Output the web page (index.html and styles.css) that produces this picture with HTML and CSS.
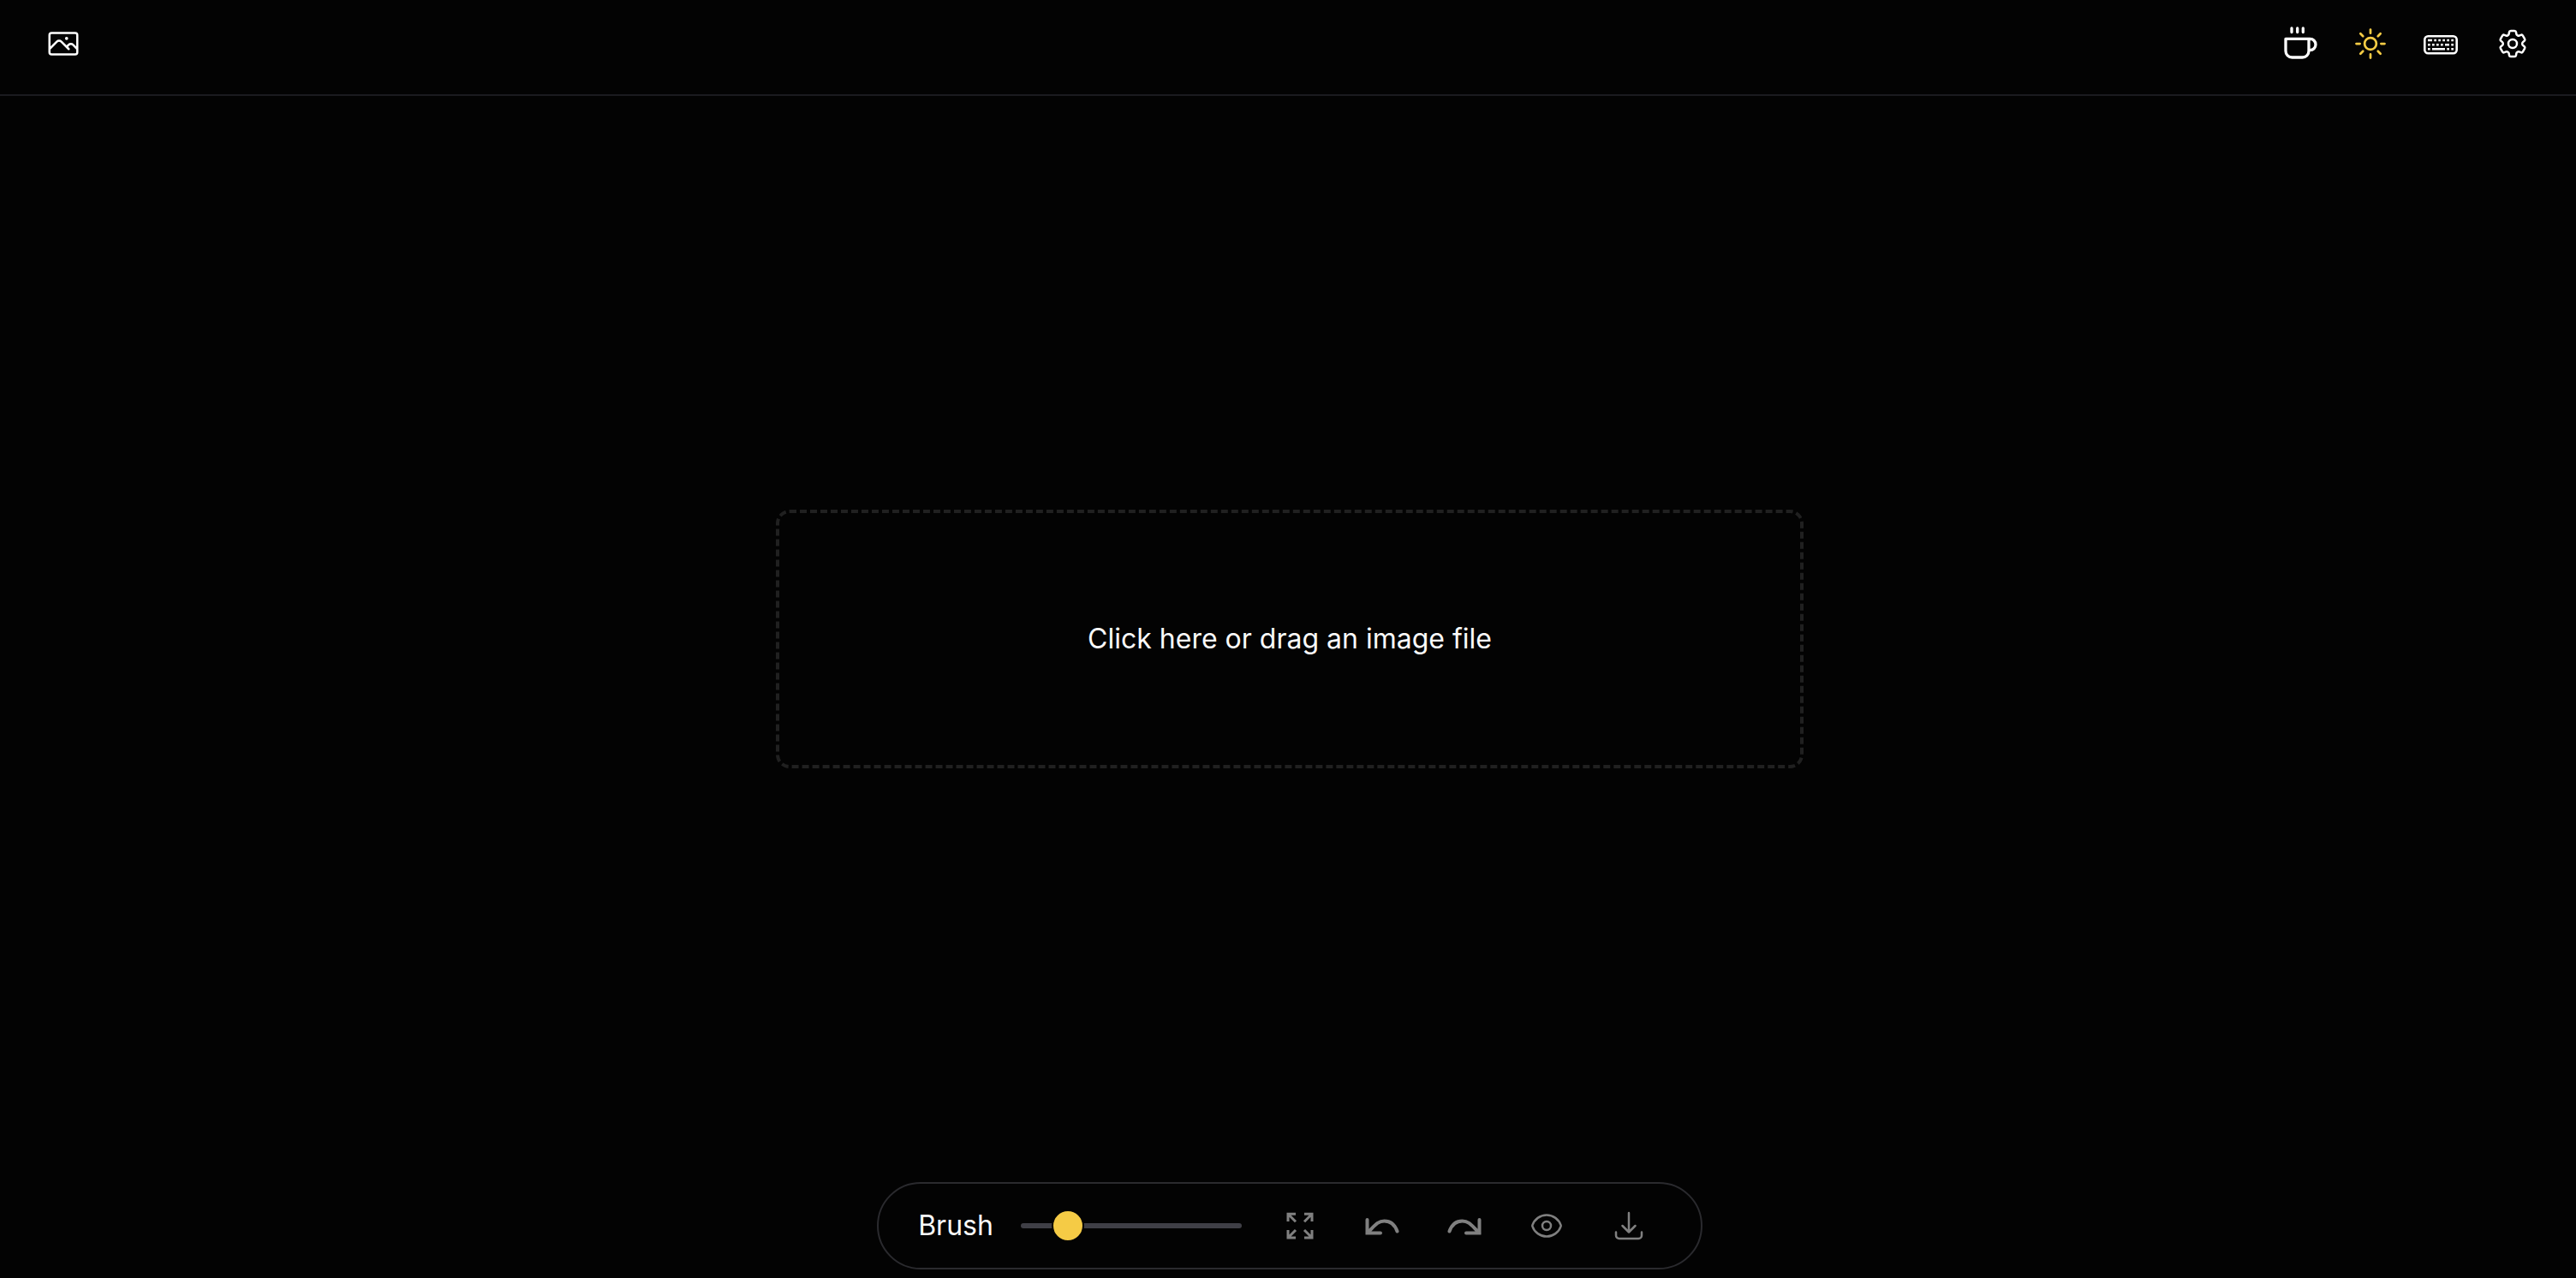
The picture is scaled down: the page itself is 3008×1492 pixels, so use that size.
FILE: index.html
```html
<!DOCTYPE html>
<html lang="en">
<head>
<meta charset="utf-8">
<meta name="viewport" content="width=device-width, initial-scale=1">
<title>Image editor</title>
<link rel="stylesheet" href="styles.css">
</head>
<body>
<header class="header">
  <button class="icon-button" type="button" aria-label="Upload image">
    <svg class="icon" viewBox="0 0 24 24"><path d="m2.25 15.75 5.159-5.159a2.25 2.25 0 0 1 3.182 0l5.159 5.159m-1.5-1.5 1.409-1.409a2.25 2.25 0 0 1 3.182 0l2.909 2.909m-18 3.75h16.5a1.5 1.5 0 0 0 1.5-1.5V6a1.5 1.5 0 0 0-1.5-1.5H3.75A1.5 1.5 0 0 0 2.25 6v12a1.5 1.5 0 0 0 1.5 1.5Zm10.5-11.25h.008v.008h-.008V8.25Zm.375 0a.375.375 0 1 1-.75 0 .375.375 0 0 1 .75 0Z"/></svg>
  </button>
  <nav class="header-actions" aria-label="Settings">
    <a class="icon-button" href="#coffee" aria-label="Buy me a coffee">
      <svg class="icon icon-coffee" viewBox="0 0 40 40"><path d="M3 14.3h27v14.2a7.5 7.5 0 0 1-7.5 7.5h-12a7.5 7.5 0 0 1-7.5-7.5ZM30 14.3h1.3a6.7 6.7 0 0 1 0 13.4H30M10 2v4.5M16.7 2v4.5M23.3 2v4.5"/></svg>
    </a>
    <button class="icon-button icon-button-accent" type="button" aria-label="Toggle theme">
      <svg class="icon icon-large" viewBox="0 0 24 24"><path d="M12 3v2.25m6.364.386-1.591 1.591M21 12h-2.25m-.386 6.364-1.591-1.591M12 18.75V21m-4.773-4.227-1.591 1.591M5.25 12H3m4.227-4.773L5.636 5.636M15.75 12a3.75 3.75 0 1 1-7.5 0 3.75 3.75 0 0 1 7.5 0Z"/></svg>
    </button>
    <button class="icon-button" type="button" aria-label="Keyboard shortcuts">
      <svg class="icon icon-large icon-keyboard" viewBox="0 0 44 44"><rect x="1.3" y="13.3" width="37.4" height="20" rx="4"/><path d="M5 18h5M12.3 18h2.7M17.3 18h2.7M22.3 18h2.7M27.3 18h2.7M32.3 18h2.7M5 23.3h2.7M10 23.3h2.7M15 23.3h2.7M20 23.3h2.7M25 23.3h5M32.3 23.3h2.7M5 28.3h2.7M10 28.3h15M27.3 28.3h2.7M32.3 28.3h2.7"/></svg>
    </button>
    <button class="icon-button" type="button" aria-label="Settings">
      <svg class="icon" viewBox="0 0 24 24"><path d="M9.594 3.94c.09-.542.56-.94 1.11-.94h2.593c.55 0 1.02.398 1.11.94l.213 1.281c.063.374.313.686.645.87.074.04.147.083.22.127.325.196.72.257 1.075.124l1.217-.456a1.125 1.125 0 0 1 1.37.49l1.296 2.247a1.125 1.125 0 0 1-.26 1.431l-1.003.827c-.293.241-.438.613-.43.992a7.723 7.723 0 0 1 0 .255c-.008.378.137.75.43.991l1.004.827c.424.35.534.955.26 1.43l-1.298 2.247a1.125 1.125 0 0 1-1.369.491l-1.217-.456c-.355-.133-.75-.072-1.076.124a6.47 6.47 0 0 1-.22.128c-.331.183-.581.495-.644.869l-.213 1.281c-.09.543-.56.94-1.11.94h-2.594c-.55 0-1.019-.398-1.11-.94l-.213-1.281c-.062-.374-.312-.686-.644-.87a6.52 6.52 0 0 1-.22-.127c-.325-.196-.72-.257-1.076-.124l-1.217.456a1.125 1.125 0 0 1-1.369-.49l-1.297-2.247a1.125 1.125 0 0 1 .26-1.431l1.004-.827c.292-.24.437-.613.43-.991a6.932 6.932 0 0 1 0-.255c.007-.38-.138-.751-.43-.992l-1.004-.827a1.125 1.125 0 0 1-.26-1.43l1.297-2.247a1.125 1.125 0 0 1 1.37-.491l1.216.456c.356.133.751.072 1.076-.124.072-.044.146-.086.22-.128.332-.183.582-.495.644-.869l.214-1.28Z"/><path d="M15 12a3 3 0 1 1-6 0 3 3 0 0 1 6 0Z"/></svg>
    </button>
  </nav>
</header>

<main class="workspace">
  <label class="dropzone" for="file">Click here or drag an image file
    <input class="file-input" id="file" type="file" accept="image/*">
  </label>
</main>

<footer class="dock">
  <div class="toolbar">
    <label class="brush-label" for="brush">Brush</label>
    <input class="slider" id="brush" type="range" min="10" max="200" value="41">
    <div class="tools">
      <button class="tool" type="button" aria-label="Reset zoom" disabled>
        <svg class="icon icon-expand" viewBox="0 0 40 40"><path d="M6 15V6.300h9M6 6.300l9 9M25 6.300h9V15M34 6.300l-9 9M6 25v9h9M6 34l9-9M25 34h9v-9M34 34l-9-9"/></svg>
      </button>
      <button class="tool" type="button" aria-label="Undo" disabled>
        <svg class="icon icon-turn" viewBox="0 0 40 40"><path d="M2.5 13v15.5h15.5M2.5 28.5C11 20.5 14 14.5 22.5 14.5C30 14.5 35 19.5 37.5 26.5"/></svg>
      </button>
      <button class="tool" type="button" aria-label="Redo" disabled>
        <svg class="icon icon-turn" viewBox="0 0 40 40"><path d="M37.5 13v15.5h-15.5M37.5 28.5C29 20.5 26 14.5 17.5 14.5C10 14.5 5 19.5 2.5 26.5"/></svg>
      </button>
      <button class="tool" type="button" aria-label="Show original" disabled>
        <svg class="icon" viewBox="0 0 24 24"><path d="M2.036 12.322a1.012 1.012 0 0 1 0-.639C3.423 7.51 7.36 4.5 12 4.5c4.638 0 8.573 3.007 9.963 7.178.07.207.07.431 0 .639C20.577 16.49 16.64 19.5 12 19.5c-4.638 0-8.573-3.007-9.963-7.178Z"/><circle cx="12" cy="12" r="3"/></svg>
      </button>
      <button class="tool" type="button" aria-label="Download" disabled>
        <svg class="icon" viewBox="0 0 24 24"><path d="M3 16.5v2.25A2.25 2.25 0 0 0 5.25 21h13.5A2.25 2.25 0 0 0 21 18.75V16.5M16.5 12 12 16.5m0 0L7.5 12m4.5 4.5V3"/></svg>
      </button>
    </div>
  </div>
</footer>
</body>
</html>
```
FILE: styles.css
```css
:root {
  --background: #030303;
  --text: #fafafa;
  --accent: #f5cb45;
  --muted: #808080;
}

* {
  box-sizing: border-box;
}

body {
  margin: 0;
  min-height: 100vh;
  display: flex;
  flex-direction: column;
  background: var(--background);
  color: var(--text);
  font-family: Inter, "Liberation Sans", sans-serif;
  font-size: 32px;
  line-height: 40px;
}

button,
input {
  margin: 0;
  padding: 0;
  border: 0;
  background: none;
  color: inherit;
  font: inherit;
}

.header {
  display: flex;
  justify-content: space-between;
  padding: 28px 54px 36px;
  border-bottom: 2px solid #1b1b1f;
}

.header-actions {
  display: flex;
  gap: 40px;
}

.icon-button {
  display: flex;
  align-items: center;
  height: 46px;
  color: #fff;
  cursor: pointer;
}

.icon-button-accent {
  color: var(--accent);
}

.icon {
  display: block;
  width: 40px;
  height: 40px;
  fill: none;
  stroke: currentColor;
  stroke-width: 1.5;
  stroke-linecap: round;
  stroke-linejoin: round;
}

.icon-large {
  width: 44px;
  height: 44px;
}

.icon-coffee {
  stroke-width: 3.3;
}

.icon-keyboard {
  stroke-width: 2.6;
  stroke-linecap: butt;
}

.icon-expand {
  stroke-width: 3;
  stroke-linecap: butt;
  stroke-linejoin: miter;
}

.icon-turn {
  stroke-width: 4;
  stroke-linejoin: miter;
}

.workspace {
  flex: 1;
  display: flex;
  align-items: center;
  justify-content: center;
  padding-left: 4px;
}

.dropzone {
  width: 1200px;
  max-width: 100%;
  padding: 127px 32px;
  border: 4px dashed #202020;
  border-radius: 16px;
  text-align: center;
  cursor: pointer;
}

.file-input {
  position: absolute;
  width: 1px;
  height: 1px;
  opacity: 0;
}

.dock {
  display: flex;
  justify-content: center;
  padding: 0 0 10px 4px;
}

.toolbar {
  display: flex;
  align-items: center;
  padding: 24px 36px 24px 46px;
  border: 2px solid #2a2a2e;
  border-radius: 52px;
}

.brush-label {
  margin-right: 32px;
}

.slider {
  appearance: none;
  width: 258px;
  height: 38px;
  margin-right: 20px;
  cursor: pointer;
}

.slider::-webkit-slider-runnable-track {
  height: 6px;
  border-radius: 3px;
  background: #3f3f46;
}

.slider::-webkit-slider-thumb {
  appearance: none;
  box-sizing: border-box;
  width: 38px;
  height: 38px;
  margin-top: -16px;
  border: 2px solid var(--background);
  border-radius: 50%;
  background: var(--accent);
}

.tools {
  display: flex;
}

.tool {
  display: flex;
  align-items: center;
  justify-content: center;
  width: 96px;
  height: 50px;
  color: var(--muted);
}
```
